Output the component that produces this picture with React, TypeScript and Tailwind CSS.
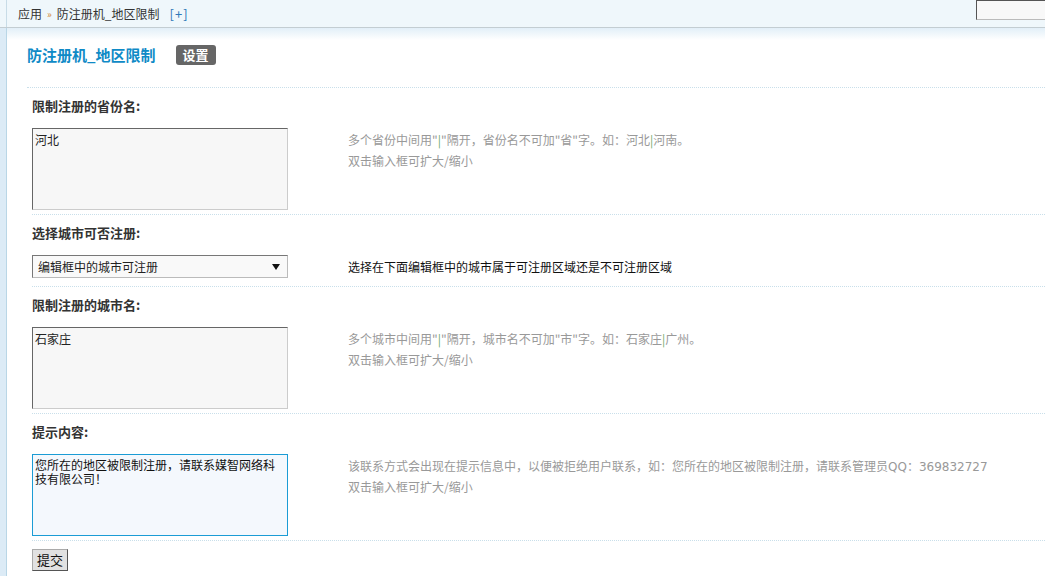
const rows = [
  {
    label: "限制注册的省份名:",
    value: "河北",
    tip: ["多个省份中间用\"", "|", "\"隔开，省份名不可加\"省\"字。如：河北", "|", "河南。"],
  },
  {
    label: "限制注册的城市名:",
    value: "石家庄",
    tip: ["多个城市中间用\"", "|", "\"隔开，城市名不可加\"市\"字。如：石家庄", "|", "广州。"],
  },
];

function Tip({parts}: {parts: string[]}) {
  return (
    <div className="pl-[60px] pt-px text-[12px] leading-[21px] text-[#999]">
      <p className="whitespace-nowrap">
        {parts.map((p, i) =>
          p === "|" ? (
            <span key={i} className="text-[#6aa86a]">|</span>
          ) : (
            <span key={i}>{p}</span>
          )
        )}
      </p>
      <p>双击输入框可扩大/缩小</p>
    </div>
  );
}

function Label({text}: {text: string}) {
  return (
    <div className="h-[20px] pt-[8px] box-content text-[13px] font-bold leading-[20px] text-[#333]">
      {text}
    </div>
  );
}

function AreaRow({label, value, tip}: {label: string; value: string; tip: string[]}) {
  return (
    <div className="border-b border-dotted border-[#c9dfea] pb-[4px]">
      <Label text={label} />
      <div className="mt-[12px] flex">
        <textarea
          defaultValue={value}
          className="block h-[82px] w-[256px] resize-none border border-t-[#666] border-l-[#666] border-r-[#ccc] border-b-[#ccc] bg-[#f7f7f7] px-[2px] pb-[1px] pt-[3px] text-[12px] leading-[15px] text-[#222] outline-none"
        />
        <Tip parts={tip} />
      </div>
    </div>
  );
}

export default function App() {
  return (
    <div className="h-[576px] w-[1045px] overflow-hidden bg-white font-['Noto_Sans_CJK_SC',sans-serif]">
      <div className="flex h-[28px] border-b border-[#c3cdd2] bg-[#eff7fb]">
        <div className="w-[7px] shrink-0 border-r border-[#c8dce7]" />
        <div className="flex items-center pl-[11px] text-[12px] text-[#333]">
          <span>应用</span>
          <span className="mx-[5px] text-[10px] text-[#d28a3c]">»</span>
          <span>防注册机_地区限制</span>
          <span className="ml-[10px] text-[13px] tracking-[1px] text-[#2e78b8]">[+]</span>
        </div>
        <input
          className="ml-auto h-[20px] w-[120px] shrink-0 translate-x-[51px] self-start border border-t-[#555] border-l-[#555] border-r-[#bbb] border-b-[#bbb] bg-[#f8f8f8] outline-none"
        />
      </div>

      <div className="flex h-[548px]">
        <div className="w-[7px] shrink-0 border-r border-[#b9d6e6] bg-[#dcebf6]" />
        <div className="flex-1 bg-[linear-gradient(to_bottom,#e2eff8,#ffffff_12px)] pl-[20px]">
          <div className="flex items-center border-b border-dotted border-[#c9dfea] pb-[22px] pt-[17px]">
            <h1 className="text-[15px] font-bold leading-[20px] text-[#0f8ac6]">防注册机_地区限制</h1>
            <span className="ml-[20px] rounded-[3px] bg-[#666] px-[7px] text-[13px] font-bold leading-[20px] text-white">
              设置
            </span>
          </div>

          <div className="pl-[5px]">
            <AreaRow {...rows[0]} />

            <div className="border-b border-dotted border-[#c9dfea] pb-[8px]">
              <Label text="选择城市可否注册:" />
              <div className="mt-[12px] flex items-center">
                <div className="relative w-[256px]">
                  <select className="block h-[23px] w-[256px] appearance-none border border-t-[#777] border-l-[#777] border-r-[#bbb] border-b-[#bbb] bg-[#f9f9f9] pl-[5px] text-[12px] text-[#222] outline-none">
                    <option>编辑框中的城市可注册</option>
                    <option>编辑框中的城市不可注册</option>
                  </select>
                  <span className="pointer-events-none absolute right-[8px] top-[9px] h-0 w-0 border-l-[4px] border-r-[4px] border-t-[6px] border-l-transparent border-r-transparent border-t-[#111]" />
                </div>
                <div className="pl-[60px] text-[12px] text-[#111]">选择在下面编辑框中的城市属于可注册区域还是不可注册区域</div>
              </div>
            </div>

            <AreaRow {...rows[1]} />

            <div className="border-b border-dotted border-[#c9dfea] pb-[4px]">
              <Label text="提示内容:" />
              <div className="mt-[12px] flex">
                <textarea
                  defaultValue="您所在的地区被限制注册，请联系媒智网络科技有限公司！"
                  className="block h-[82px] w-[256px] resize-none border border-[#1b9cd5] bg-[#f4f8fd] px-[2px] pb-[2px] pt-[3px] text-[12px] leading-[14px] text-[#111] outline-none"
                />
                <div className="pl-[60px] pt-px text-[12px] leading-[21px] text-[#999]">
                  <p className="h-[21px] whitespace-nowrap">
                    该联系方式会出现在提示信息中，以便被拒绝用户联系，如：您所在的地区被限制注册，请联系管理员
                    <span className="font-['DejaVu_Sans',sans-serif] leading-none">QQ</span>：
                    <span className="font-['DejaVu_Sans',sans-serif] leading-none">369832727</span>
                  </p>
                  <p>双击输入框可扩大/缩小</p>
                </div>
              </div>
            </div>

            <button className="mt-[8px] h-[22px] w-[36px] border border-t-[#aaa] border-l-[#aaa] border-r-[#555] border-b-[#555] bg-[#e1e1e1] text-[13px] leading-[18px] text-[#111]">
              提交
            </button>
          </div>
        </div>
      </div>
    </div>
  );
}
